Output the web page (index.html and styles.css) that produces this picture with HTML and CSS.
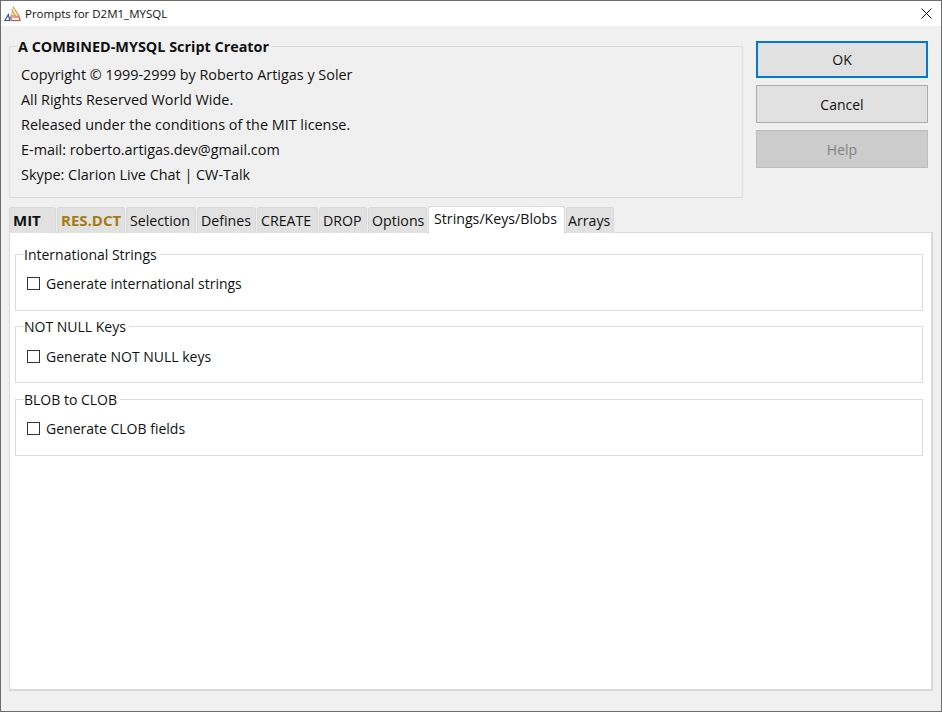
FILE: index.html
```html
<!DOCTYPE html>
<html lang="en">
<head>
  <meta charset="UTF-8" />
  <title>Prompts for D2M1_MYSQL</title>
  <link rel="stylesheet" href="styles.css">
</head>
<body>
  <div class="window">
    <div class="titlebar">
      <svg class="app-icon" width="17" height="16" viewBox="0 0 17 16" fill="none">
        <path d="M9 .8 L15 10 H11.6 L7.6 3.4" stroke="#e8912d" stroke-width="1.2"/>
        <path d="M8.8 5.6 L11 9.5 H7 Z" stroke="#eda04a" stroke-width="1"/>
        <path d="M.8 14.5 L4.4 8.6 L5.8 14.5 Z" stroke="#1f5f9e" stroke-width="1.2"/>
        <path d="M6.6 11 H15 L16.2 14.5 H7.4 Z" stroke="#dd4b39" stroke-width="1.2"/>
      </svg>
      <span class="title">Prompts for D2M1_MYSQL</span>
      <svg class="close" width="11" height="11" viewBox="0 0 11 11">
        <path d="M.5 .5 L10.5 10.5 M10.5 .5 L.5 10.5" stroke="#111" stroke-width="1" fill="none"/>
      </svg>
    </div>

    <div class="content">
      <div class="top">
        <fieldset class="about">
          <legend>A COMBINED-MYSQL Script Creator</legend>
          <p>Copyright © 1999-2999 by Roberto Artigas y Soler</p>
          <p>All Rights Reserved World Wide.</p>
          <p>Released under the conditions of the MIT license.</p>
          <p>E-mail: roberto.artigas.dev@gmail.com</p>
          <p>Skype: Clarion Live Chat | CW-Talk</p>
        </fieldset>
        <div class="buttons">
          <button class="btn default">OK</button>
          <button class="btn">Cancel</button>
          <button class="btn disabled">Help</button>
        </div>
      </div>

      <div class="tabs">
        <div class="tab bold">MIT</div>
        <div class="tab bold gold">RES.DCT</div>
        <div class="tab">Selection</div>
        <div class="tab">Defines</div>
        <div class="tab">CREATE</div>
        <div class="tab">DROP</div>
        <div class="tab">Options</div>
        <div class="tab active">Strings/Keys/Blobs</div>
        <div class="tab last">Arrays</div>
      </div>

      <div class="panel">
        <fieldset class="group">
          <legend>International Strings</legend>
          <label class="check"><span class="box"></span>Generate international strings</label>
        </fieldset>
        <fieldset class="group keys">
          <legend>NOT NULL Keys</legend>
          <label class="check"><span class="box"></span>Generate NOT NULL keys</label>
        </fieldset>
        <fieldset class="group">
          <legend>BLOB to CLOB</legend>
          <label class="check"><span class="box"></span>Generate CLOB fields</label>
        </fieldset>
      </div>
    </div>
  </div>
</body>
</html>
```

FILE: styles.css
```css
html, body {
  margin: 0;
  padding: 0;
  height: 100%;
  overflow: hidden;
  font-family: "Open Sans", "Noto Sans", sans-serif;
  font-size: 14px;
  color: #111;
}
.window {
  box-sizing: border-box;
  width: 942px;
  height: 712px;
  border: 1px solid #6d6d6d;
  display: flex;
  flex-direction: column;
  background: #f0f0f0;
}
.titlebar {
  height: 25px;
  flex: none;
  background: #fff;
  display: flex;
  align-items: center;
  padding: 0 9px 0 3px;
}
.app-icon { margin-right: 4px; }
.title { font-size: 11.5px; flex: 1; }
.content {
  flex: 1;
  display: flex;
  flex-direction: column;
  padding: 15px 8px 20px 8px;
}
.top {
  display: flex;
  gap: 13px;
  height: 165px;
}
fieldset {
  margin: 0;
  padding: 0;
  min-width: 0;
  border: 1px solid #dcdcdc;
}
.about {
  box-sizing: border-box;
  width: 734px;
  height: 161px;
  margin-top: -4px;
  padding: 6px 0 0 11px;
}
.about legend {
  font-size: 14.4px;
  font-weight: 700;
  margin-left: -3px;
  padding: 0 3px 0 0;
  line-height: 19px;
}
.about p {
  margin: 0;
  height: 25px;
  line-height: 25px;
  font-size: 14.4px;
}
.buttons {
  display: flex;
  flex-direction: column;
  gap: 7px;
  width: 172px;
}
.btn {
  box-sizing: border-box;
  height: 38px;
  padding: 0;
  font: inherit;
  color: #111;
  background: #e1e1e1;
  border: 1px solid #adadad;
}
.btn.default { height: 37px; border: 2px solid #0078d7; }
.btn.disabled { background: #cccccc; border-color: #bdbdbd; color: #838383; }
.tabs {
  display: grid;
  grid-template-columns: 47px 68px 70px 59px 61px 48px 59px 137px 48px;
  gap: 1px;
  align-items: end;
  height: 26px;
  position: relative;
  z-index: 1;
}
.tab {
  box-sizing: border-box;
  height: 26px;
  line-height: 25px;
  padding: 0 0 0 3px;
  font-size: 14.2px;
  white-space: nowrap;
  background: #e1e1e1;
  border: 1px solid #d9d9d9;
  border-bottom: none;
  border-radius: 3px 3px 0 0;
}
.tab.bold { font-weight: 700; font-size: 15px; }
.tab.gold { color: #a87a12; }
.tab.active {
  height: 28px;
  line-height: 23px;
  padding-left: 5px;
  background: #fff;
  margin-bottom: -1px;
}
.tab.last { padding-left: 1px; }
.panel {
  flex: 1;
  width: 924px;
  box-sizing: border-box;
  background: #fff;
  border: 1px solid #d9d9d9;
  border-width: 1px 2px 2px 1px;
  padding: 12px 8px 0 5px;
  display: flex;
  flex-direction: column;
  gap: 6px;
}
.group {
  height: 66px;
  box-sizing: border-box;
  border-width: 1px;
  padding: 0 0 0 11px;
}
.group:last-child { margin-top: 1px; }
.group legend {
  margin-left: -3px;
  padding: 0 3px 0 0;
  line-height: 19px;
}
.check {
  display: flex;
  align-items: center;
  gap: 6px;
  height: 20px;
  margin-top: 9px;
}
.group.keys .check { margin-top: 10px; }
.box {
  box-sizing: border-box;
  width: 13px;
  height: 13px;
  border: 1px solid #333;
  background: #fff;
}
```
